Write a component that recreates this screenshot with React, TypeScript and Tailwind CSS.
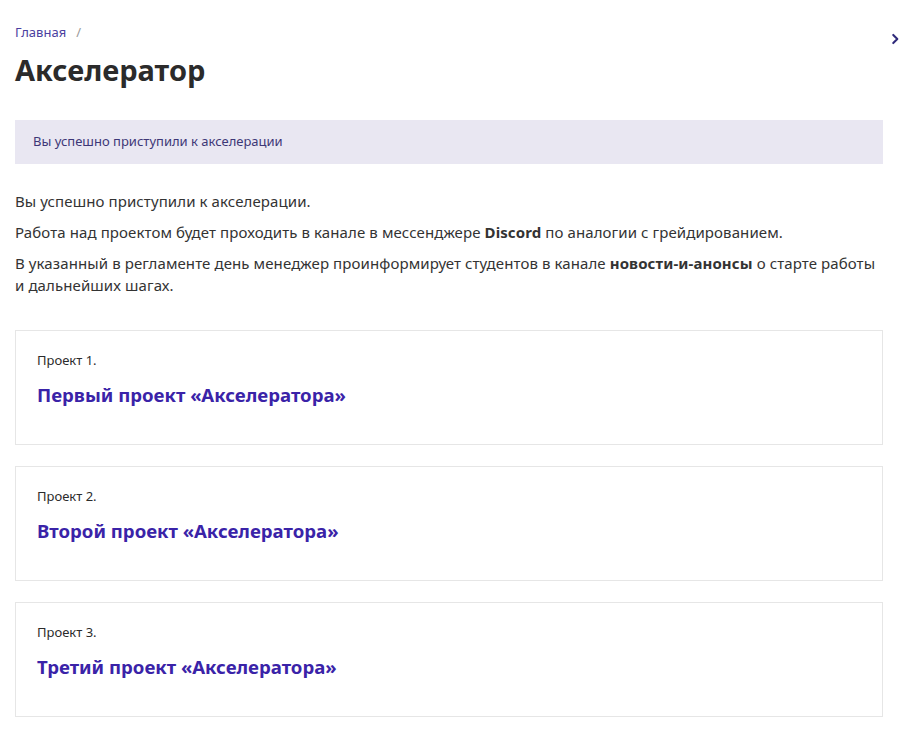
import React from 'react';

const projects = [
  { label: 'Проект 1.', title: 'Первый проект «Акселератора»' },
  { label: 'Проект 2.', title: 'Второй проект «Акселератора»' },
  { label: 'Проект 3.', title: 'Третий проект «Акселератора»' },
];

const App: React.FC = () => {
  return (
    <div className="min-h-screen bg-white font-['Noto_Sans',sans-serif] text-[#2b2b2b]">
      <div className="flex">
        <div className="w-[868px] ml-[15px] pt-[22px] pb-5">
          {/* breadcrumbs */}
          <nav className="flex items-center gap-[10px] text-[13px] leading-[20px]">
            <a className="text-[#4b3fa0]">Главная</a>
            <span className="text-[#9a9a9a]">/</span>
          </nav>

          <h1 className="mt-[9px] text-[29px] leading-[38px] font-bold text-[#2b2b2b]">Акселератор</h1>

          <div className="mt-[31px] h-[44px] flex items-center px-[18px] bg-[#e9e7f2] text-[13px] text-[#3d3777]">
            Вы успешно приступили к акселерации
          </div>

          <div className="mt-[26px] text-[15px] leading-[22px] tracking-[0.1px] text-[#333] flex flex-col gap-[9px]">
            <p>Вы успешно приступили к акселерации.</p>
            <p>
              Работа над проектом будет проходить в канале в мессенджере <b>Discord</b> по аналогии с
              грейдированием.
            </p>
            <p>
              В указанный в регламенте день менеджер проинформирует студентов в канале{' '}
              <b>новости-и-анонсы</b> о старте работы и дальнейших шагах.
            </p>
          </div>

          <div className="mt-[34px] flex flex-col gap-[21px]">
            {projects.map((p) => (
              <div key={p.label} className="h-[115px] border border-[#e6e6e6] px-[21px] pt-[19px]">
                <div className="text-[13px] leading-[20px] text-[#2b2b2b]">{p.label}</div>
                <a className="block mt-[12px] text-[18.6px] leading-[26px] font-bold text-[#3a23a8]">{p.title}</a>
              </div>
            ))}
          </div>
        </div>

        <div className="flex-1 flex justify-center pt-[32px]">
          <svg width="14" height="14" viewBox="0 0 24 24" fill="none" stroke="#2f2a7a" strokeWidth="3.5" strokeLinecap="round" strokeLinejoin="round">
            <path d="M9 5l7 7-7 7" />
          </svg>
        </div>
      </div>
    </div>
  );
};

export default App;
